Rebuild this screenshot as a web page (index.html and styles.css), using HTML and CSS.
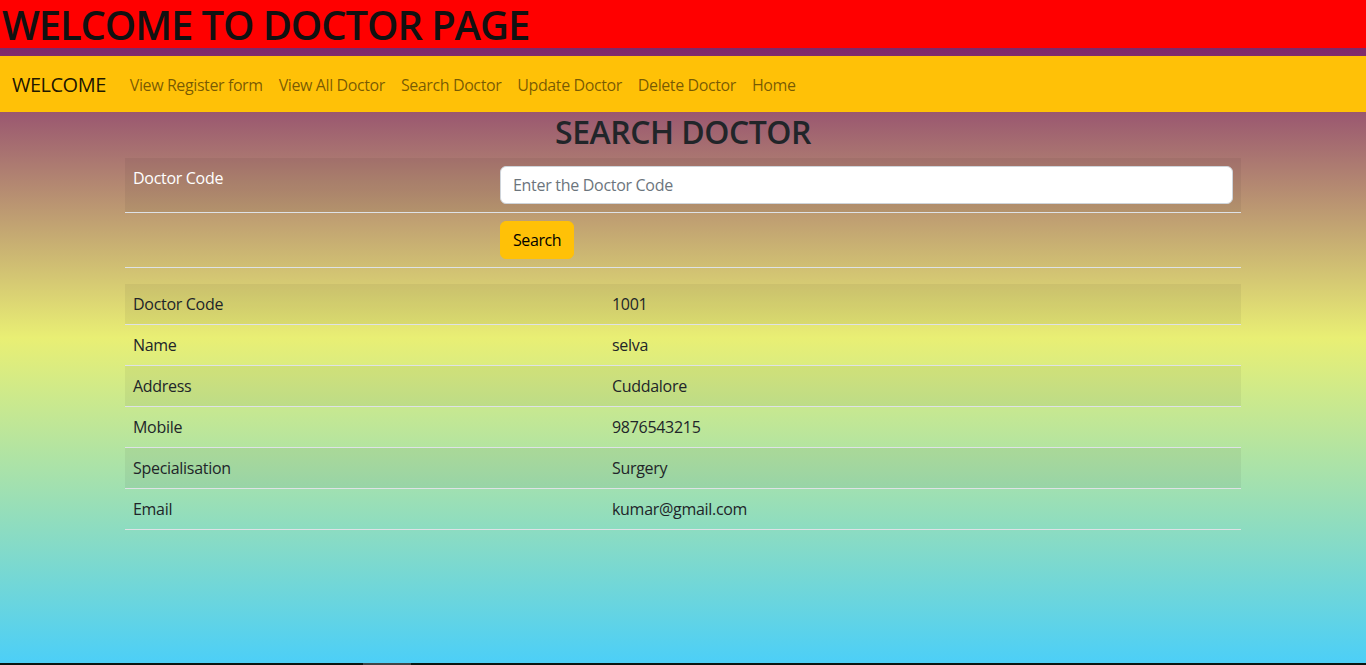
FILE: index.html
```html
<!DOCTYPE html>
<html lang="en">
<head>
<meta charset="utf-8">
<title>Doctor Page</title>
<link rel="stylesheet" href="styles.css">
</head>
<body>
<h1 class="page-title">WELCOME TO DOCTOR PAGE</h1>
<nav class="navbar">
  <a class="brand" href="#">WELCOME</a>
  <ul class="nav-links">
    <li><a href="#">View Register form</a></li>
    <li><a href="#">View All Doctor</a></li>
    <li><a href="#">Search Doctor</a></li>
    <li><a href="#">Update Doctor</a></li>
    <li><a href="#">Delete Doctor</a></li>
    <li><a href="#">Home</a></li>
  </ul>
</nav>
<main class="container">
  <h2 class="section-title">SEARCH DOCTOR</h2>
  <form class="search-form">
    <table class="table form-table">
      <tr class="striped">
        <td class="col-label"><label class="form-label" for="code">Doctor Code</label></td>
        <td><input id="code" class="form-control" type="text" placeholder="Enter the Doctor Code"></td>
      </tr>
      <tr>
        <td class="col-label"></td>
        <td><button type="button" class="btn-warning">Search</button></td>
      </tr>
    </table>
  </form>
  <table class="table result-table">
    <tr class="striped"><td class="col-key">Doctor Code</td><td>1001</td></tr>
    <tr><td class="col-key">Name</td><td>selva</td></tr>
    <tr class="striped"><td class="col-key">Address</td><td>Cuddalore</td></tr>
    <tr><td class="col-key">Mobile</td><td>9876543215</td></tr>
    <tr class="striped"><td class="col-key">Specialisation</td><td>Surgery</td></tr>
    <tr><td class="col-key">Email</td><td>kumar@gmail.com</td></tr>
  </table>
</main>
<div class="screen-edge"><span class="edge-mark"></span></div>
</body>
</html>
```

FILE: styles.css
```css
* { box-sizing: border-box; }
html, body { margin: 0; padding: 0; }
body {
  min-height: 100vh;
  font-family: "Open Sans", "Noto Sans", "Liberation Sans", sans-serif;
  font-size: 16px;
  line-height: 1.5;
  color: #212529;
  background: linear-gradient(to bottom,
    #78216a 0px,
    #7f2a6b 52px,
    #9a5770 112px,
    #e9ef74 338px,
    #4ccff7 663px);
}
.page-title {
  margin: 0 0 8px 0;
  padding: 1px 0 0 2px;
  height: 48px;
  background: #ff0000;
  color: #111;
  font-size: 40px;
  font-weight: 600;
  line-height: 47px;
  letter-spacing: -1.1px;
  white-space: nowrap;
}
.navbar {
  display: flex;
  align-items: center;
  background: #ffc107;
  padding: 8px 12px;
  height: 56px;
}
.brand {
  font-size: 20px;
  line-height: 30px;
  padding-top: 2px;
  color: rgba(0,0,0,.9);
  text-decoration: none;
  margin-right: 16px;
  letter-spacing: -0.5px;
}
.nav-links {
  display: flex;
  list-style: none;
  margin: 0;
  padding: 0;
}
.nav-links a {
  display: block;
  padding: 9px 8px 7px;
  color: rgba(0,0,0,.55);
  text-decoration: none;
  letter-spacing: -0.4px;
}
.container {
  width: 1140px;
  margin: 0 auto;
  padding: 0 12px;
}
.section-title {
  margin: 0 0 8px 0;
  padding-top: 2px;
  height: 38px;
  text-align: center;
  font-size: 32px;
  font-weight: 600;
  line-height: 36px;
  letter-spacing: -0.5px;
}
.search-form { margin: 0; }
.table {
  width: 100%;
  border-collapse: collapse;
  margin-bottom: 16px;
}
.table td {
  padding: 8px;
  border-bottom: 1px solid #dee2e6;
  vertical-align: top;
  letter-spacing: -0.3px;
}
.table tr.striped td { background: rgba(0,0,0,.05); }
.form-table .col-label { width: 367px; }
.result-table .col-key { width: 479px; }
.form-label {
  color: #fff;
  display: inline-block;
}
.form-control {
  display: block;
  width: 100%;
  height: 38px;
  padding: 6px 12px;
  font: inherit;
  letter-spacing: -0.3px;
  color: #212529;
  background: #fff;
  border: 1px solid #ced4da;
  border-radius: 6px;
}
.form-control::placeholder { color: #6c757d; }
.btn-warning {
  display: inline-block;
  height: 38px;
  padding: 6px 12px;
  font: inherit;
  letter-spacing: -0.4px;
  color: #000;
  background: #ffc107;
  border: 1px solid #ffc107;
  border-radius: 6px;
}
.screen-edge {
  position: fixed;
  left: 0;
  right: 0;
  bottom: 0;
  height: 2px;
  background: #0b1611;
}
.edge-mark {
  position: absolute;
  left: 363px;
  top: 0;
  width: 48px;
  height: 2px;
  background: #404546;
}
```
